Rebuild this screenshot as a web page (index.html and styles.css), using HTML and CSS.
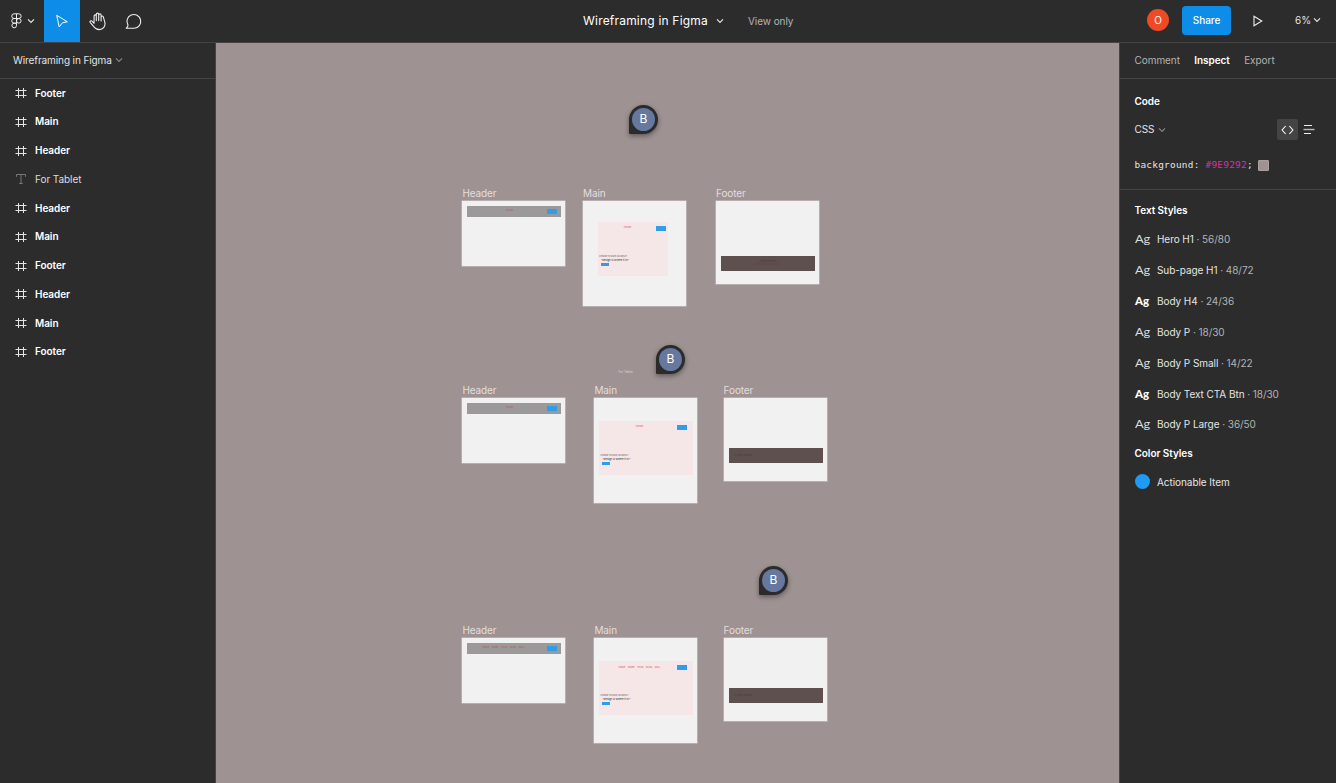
FILE: index.html
```html
<!DOCTYPE html>
<html lang="en">
<head>
<meta charset="utf-8">
<title>Wireframing in Figma</title>
<link rel="stylesheet" href="styles.css">
</head>
<body>
<svg class="defs" width="0" height="0">
  <symbol id="frame" viewBox="0 0 12 12"><path d="M3.5 1v10M8.5 1v10M.5 3.5h11M.5 8.5h11" fill="none" stroke="#e4e4e4" stroke-width="1"/></symbol>
  <symbol id="chev" viewBox="0 0 8 6"><path d="M1 1.3 4 4.3 7 1.3" fill="none" stroke="currentColor" stroke-width="1.2"/></symbol>
</svg>
<header class="topbar">
  <div class="tools">
    <div class="logo">
      <svg width="11" height="16" viewBox="0 0 11 16"><g fill="none" stroke="#eee" stroke-width="1"><path d="M5.5.8H3.1a2.3 2.3 0 0 0 0 4.7h2.4zM5.5.8h2.3a2.3 2.3 0 0 1 0 4.7H5.5zM5.5 5.5H3.1a2.3 2.3 0 0 0 0 4.7h2.4zM5.5 10.2H3.1a2.3 2.3 0 1 0 2.4 2.4z"/><circle cx="7.8" cy="7.85" r="2.3"/></g></svg>
      <svg class="chev" width="8" height="6"><use href="#chev"/></svg>
    </div>
    <div class="tool tool-active"><svg width="14" height="15" viewBox="0 0 14 15"><path d="M1.7 1.3 12.3 7.8 7.4 8.8 4.2 13z" fill="none" stroke="#fff" stroke-width="1"/></svg></div>
    <div class="tool"><svg width="18" height="19" viewBox="0 0 18 19"><path d="M5.1 11.7V4.1C5.1 2.5 7.3 2.5 7.3 4.1V8.6 2.4C7.3.7 9.7.7 9.7 2.4V8.6 3.1C9.7 1.5 12.1 1.5 12.1 3.1V9 5.2C12.1 3.6 14.4 3.6 14.4 5.2L15.9 10.7C16.5 14.8 13.9 17.6 10.3 17.6 7.3 17.6 5.9 16.3 4.4 14.2L1.3 10.6C.4 9.4 2 8 3.3 9.3L5.1 11.5" fill="none" stroke="#eee" stroke-width="1.1" stroke-linejoin="round"/></svg></div>
    <div class="tool"><svg width="18" height="17" viewBox="0 0 18 17"><path d="M3 12.1A6.9 6.9 0 1 1 9.2 15.3H1.2Q3 14.2 3 12.1z" fill="none" stroke="#eee" stroke-width="1.1" stroke-linejoin="round"/></svg></div>
  </div>
  <div class="doc"><span class="doc-title">Wireframing in Figma</span><svg class="chev" width="8" height="6"><use href="#chev"/></svg><span class="view">View only</span></div>
  <div class="actions">
    <span class="avatar">O</span><span class="share">Share</span>
    <svg class="play" width="10" height="12" viewBox="0 0 10 12"><path d="M1 1.2v9.6L8.8 6z" fill="none" stroke="#eee" stroke-width="1.1"/></svg>
    <span class="zoom">6%</span><svg class="chev" width="8" height="6"><use href="#chev"/></svg>
  </div>
</header>
<div class="workspace">
  <aside class="layers">
    <div class="page-name"><span>Wireframing in Figma</span><svg class="chev dim" width="8" height="6"><use href="#chev"/></svg></div>
    <ul class="layer-list">
      <li><svg width="12" height="12"><use href="#frame"/></svg><span>Footer</span></li>
      <li><svg width="12" height="12"><use href="#frame"/></svg><span>Main</span></li>
      <li><svg width="12" height="12"><use href="#frame"/></svg><span>Header</span></li>
      <li class="text-layer"><svg width="12" height="12" viewBox="0 0 12 12"><path d="M1.5 3.8V1.5h9v2.3M6 1.5v9M4.2 10.5h3.6" fill="none" stroke="#777" stroke-width="1"/></svg><span>For Tablet</span></li>
      <li><svg width="12" height="12"><use href="#frame"/></svg><span>Header</span></li>
      <li><svg width="12" height="12"><use href="#frame"/></svg><span>Main</span></li>
      <li><svg width="12" height="12"><use href="#frame"/></svg><span>Footer</span></li>
      <li><svg width="12" height="12"><use href="#frame"/></svg><span>Header</span></li>
      <li><svg width="12" height="12"><use href="#frame"/></svg><span>Main</span></li>
      <li><svg width="12" height="12"><use href="#frame"/></svg><span>Footer</span></li>
    </ul>
  </aside>
  <main class="canvas">
    <section class="board header-board row1 col1"><h3>Header</h3><div class="bar"><i class="nav one">HOME</i><b class="cta"></b></div></section>
    <section class="board main-board row1 col2a"><h3>Main</h3><div class="hero narrow"><i class="nav one">HOME</i><b class="cta"></b><p class="kick">CHOOSE TO MAKE AN IMPACT</p><p class="head">“Design is Where it is!”</p><b class="btn"></b></div></section>
    <section class="board footer-board row1 col3a"><h3>Footer</h3><div class="foot"><i class="note mid">All rights reserved</i><i class="note mid red">Wireframing in Figma design</i></div></section>

    <section class="board header-board row2 col1"><h3>Header</h3><div class="bar"><i class="nav one">HOME</i><b class="cta"></b></div></section>
    <section class="board main-board row2 col2"><h3>Main</h3><div class="hero"><i class="nav one">HOME</i><b class="cta"></b><p class="kick">CHOOSE TO MAKE AN IMPACT</p><p class="head">“Design is Where it is!”</p><b class="btn"></b></div></section>
    <section class="board footer-board row2 col3"><h3>Footer</h3><div class="foot"><i class="note">All rights reserved</i></div></section>

    <section class="board header-board row3 col1"><h3>Header</h3><div class="bar"><i class="nav many"><span>HOME</span><span>WORK</span><span>TEAM</span><span>BLOG</span><span>MAIL</span></i><b class="cta"></b></div></section>
    <section class="board main-board row3 col2"><h3>Main</h3><div class="hero"><i class="nav many"><span>HOME</span><span>WORK</span><span>TEAM</span><span>BLOG</span><span>MAIL</span></i><b class="cta"></b><p class="kick">CHOOSE TO MAKE AN IMPACT</p><p class="head">“Design is Where it is!”</p><b class="btn"></b></div></section>
    <section class="board footer-board row3 col3"><h3>Footer</h3><div class="foot"><i class="note">All rights reserved</i></div></section>

    <span class="tablet">For Tablet</span>
    <div class="pin pin1"><span>B</span></div>
    <div class="pin pin2"><span>B</span></div>
    <div class="pin pin3"><span>B</span></div>
  </main>
  <aside class="inspect">
    <nav class="tabs"><span>Comment</span><span class="on">Inspect</span><span>Export</span></nav>
    <section class="code">
      <h2>Code</h2>
      <div class="lang"><span class="lang-name">CSS</span><svg class="chev dim" width="8" height="6"><use href="#chev"/></svg>
        <span class="modes"><span class="mode"><svg width="13" height="10" viewBox="0 0 13 10"><path d="M4.6 1 1.1 5l3.5 4M8.4 1l3.5 4-3.5 4" fill="none" stroke="#fff" stroke-width="1.1"/></svg></span><svg width="12" height="9" viewBox="0 0 12 9"><path d="M1 .5h8M1 8.5h7" stroke="#eee"/><path d="M.5 4.5h11" stroke="#bbb" stroke-width="1.4"/></svg></span></div>
      <div class="prop"><code>background: <em>#9E9292</em>;</code><i class="swatch"></i></div>
    </section>
    <section class="styles">
      <h2>Text Styles</h2>
      <ul>
        <li><span class="ag"><b>Ag</b></span><span>Hero H1 <small>· 56/80</small></span></li>
        <li><span class="ag"><b>Ag</b></span><span>Sub-page H1 <small>· 48/72</small></span></li>
        <li><span class="ag bold"><b>Ag</b></span><span>Body H4 <small>· 24/36</small></span></li>
        <li><span class="ag"><b>Ag</b></span><span>Body P <small>· 18/30</small></span></li>
        <li><span class="ag"><b>Ag</b></span><span>Body P Small <small>· 14/22</small></span></li>
        <li><span class="ag bold"><b>Ag</b></span><span>Body Text CTA Btn <small>· 18/30</small></span></li>
        <li><span class="ag"><b>Ag</b></span><span>Body P Large <small>· 36/50</small></span></li>
      </ul>
      <h2 class="color-title">Color Styles</h2>
      <div class="color"><i></i><span>Actionable Item</span></div>
    </section>
  </aside>
</div>
</body>
</html>
```
FILE: styles.css
```css
* { box-sizing: border-box; }
body { margin: 0; width: 1336px; height: 783px; overflow: hidden; display: flex; flex-direction: column; background: #2c2c2c; color: #e5e5e5; font: 10px/14px Inter, sans-serif; letter-spacing: -.06px; }
h2, h3, p, ul { margin: 0; padding: 0; list-style: none; }
svg { display: block; flex: none; }
.defs { position: absolute; }
.dim { color: #858585; }
.topbar { height: 43px; flex: none; display: grid; grid-template-columns: 583px 1fr auto; border-bottom: 1px solid #444; }
.tools { display: flex; }
.logo { width: 44px; padding: 1px 0 2px 11px; display: flex; align-items: center; gap: 5px; }
.tool { width: 36px; display: grid; place-items: center; }
.tool-active { background: #0d8de8; }
.doc { display: flex; align-items: center; padding-bottom: 1px; }
.doc-title { font-size: 12px; color: #fff; letter-spacing: .2px; margin-right: 8px; }
.view { color: #b3b3b3; margin-left: 24px; }
.actions { display: flex; align-items: center; padding: 0 15px 2px 0; }
.avatar { width: 22px; height: 22px; border-radius: 50%; background: #ee4a25; color: #fff; line-height: 22px; text-align: center; }
.share { width: 49px; height: 29px; margin-left: 13px; border-radius: 4px; background: #0d8de8; color: #fff; line-height: 28px; text-align: center; font-weight: 500; }
.play { margin: 2px 0 0 22px; }
.zoom { margin: 0 4px 0 32px; width: 14px; }
.workspace { flex: 1; display: grid; grid-template-columns: 216px 903px 217px; min-height: 0; }
.layers { border-right: 1px solid #444; }
.page-name { height: 36px; display: flex; align-items: center; gap: 3px; padding: 0 0 2px 13px; border-bottom: 1px solid #444; letter-spacing: -.1px; }
.layer-list { margin-top: -.8px; }
.layer-list li { height: 28.77px; display: flex; align-items: center; gap: 8px; padding-left: 15px; font-weight: 600; color: #fff; }
.layer-list li svg { margin-top: 1px; }
.layer-list .text-layer { font-weight: 400; color: #ddd; }
.canvas { position: relative; background: #9e9292; overflow: hidden; }
.board { position: absolute; width: 103px; background: #f1f1f1; box-shadow: 0 0 0 .6px rgba(241,241,241,.5); }
.board h3 { position: absolute; top: -14px; left: 0; font-size: 10px; line-height: 13px; font-weight: 400; color: #e3dfdf; letter-spacing: -.1px; }
.header-board { height: 65px; }
.main-board { height: 105px; }
.footer-board { height: 83px; }
.row1 { top: 158px; }
.row2 { top: 355px; }
.row3 { top: 595px; }
.col1 { left: 246.4px; }
.col2 { left: 378.4px; }
.col2a { left: 367px; }
.col3 { left: 507.6px; }
.col3a { left: 500px; }
.bar { position: absolute; left: 5px; right: 4px; top: 5px; height: 11px; background: #9b9999; }
.hero { position: absolute; left: 5px; top: 23px; width: 94px; height: 54px; background: #f5e7e7; }
.hero.narrow { left: 15px; top: 21px; width: 70px; }
.nav, .kick, .head, .note { position: absolute; font-style: normal; line-height: 3px; white-space: nowrap; letter-spacing: 0; }
.nav { color: #dc4e5e; font-size: 2.5px; }
.nav.one { left: 0; right: 0; top: 4px; text-align: center; }
.bar .nav { color: #c05058; }
.bar .nav.one { right: 10px; top: 3px; }
.hero .nav.one { right: 14px; }
.narrow .nav.one { right: 11px; }
.nav.many { display: flex; gap: 2.4px; left: 15px; top: 3px; font-size: 2.3px; }
.hero .nav.many { left: 19px; top: 4.5px; }
.cta, .btn { position: absolute; background: #2f9de9; }
.cta { width: 10px; height: 4.5px; right: 4px; top: 3px; }
.hero .cta { right: 6px; top: 4px; }
.narrow .cta { right: 2px; }
.kick { left: 1px; top: 33px; font-size: 1.9px; color: #555; }
.head { left: 3px; top: 36.5px; font-size: 2.6px; color: #222; }
.btn { left: 2.5px; top: 41px; width: 8px; height: 3px; }
.foot { position: absolute; left: 5px; right: 4px; top: 50px; height: 15px; background: #5d504f; }
.row1 .foot { top: 55px; }
.note { left: 6px; top: 6px; font-size: 2px; color: #463d3c; }
.note.mid { left: 0; right: 0; text-align: center; top: 4px; }
.note.red { top: 6.5px; color: #713c40; }
.tablet { position: absolute; left: 402.5px; top: 327px; font-size: 3px; line-height: 5px; color: #dcd6d6; letter-spacing: 0; }
.pin { position: absolute; width: 29px; height: 29px; padding: 3px; border-radius: 50% 50% 50% 1px; background: #2b2b2b; box-shadow: 0 2px 5px rgba(0,0,0,.4); }
.pin span { display: block; width: 23px; height: 23px; border-radius: 50%; background: #66789d; color: #fff; font-size: 12px; line-height: 22px; text-align: center; }
.pin1 { left: 413px; top: 62px; }
.pin2 { left: 440px; top: 302px; }
.pin3 { left: 543px; top: 523px; }
.inspect { border-left: 1px solid #444; }
.tabs { height: 36px; display: flex; align-items: center; gap: 14.4px; padding: 0 0 2px 14.5px; border-bottom: 1px solid #444; color: #b3b3b3; }
.tabs .on { color: #fff; font-weight: 600; }
.inspect h2 { font-size: 10px; line-height: 14px; font-weight: 600; color: #fff; }
.code { height: 111px; padding: 15px 21px 0 14.5px; border-bottom: 1px solid #444; }
.lang { height: 21px; margin-top: 11px; display: flex; align-items: center; gap: 4px; }
.lang-name { margin-top: -1px; }
.modes { margin-left: auto; display: flex; align-items: center; gap: 5px; }
.mode { width: 21px; height: 21px; border-radius: 2px; background: #444; display: grid; place-items: center; }
.prop { height: 14px; margin-top: 18px; display: flex; align-items: center; gap: 5px; }
.prop code { font: 9.4px/14px "DejaVu Sans Mono", monospace; letter-spacing: .27px; white-space: pre; }
.prop em { font-style: normal; color: #df2fa5; }
.swatch { width: 11px; height: 11px; background: #9e9292; border: 1px solid #aaa0a0; border-radius: 1px; }
.styles { padding: 13px 0 0 14.5px; }
.styles ul { margin-top: 7px; }
.styles li { height: 30.83px; display: flex; align-items: center; }
.styles small { font-size: 10px; color: #b3b3b3; }
.ag { width: 22.5px; color: #ddd; }
.ag b { display: inline-block; font: 400 11px/14px Lato, sans-serif; transform: scaleX(1.16); transform-origin: left; }
.ag.bold b { font-weight: 900; color: #fff; transform: scaleX(1.04); }
.styles .color-title { margin-top: 6px; }
.color { display: flex; align-items: center; height: 30px; margin-top: 7px; gap: 7.5px; }
.color i { width: 15px; height: 15px; border-radius: 50%; background: #1d9bf5; }
```
